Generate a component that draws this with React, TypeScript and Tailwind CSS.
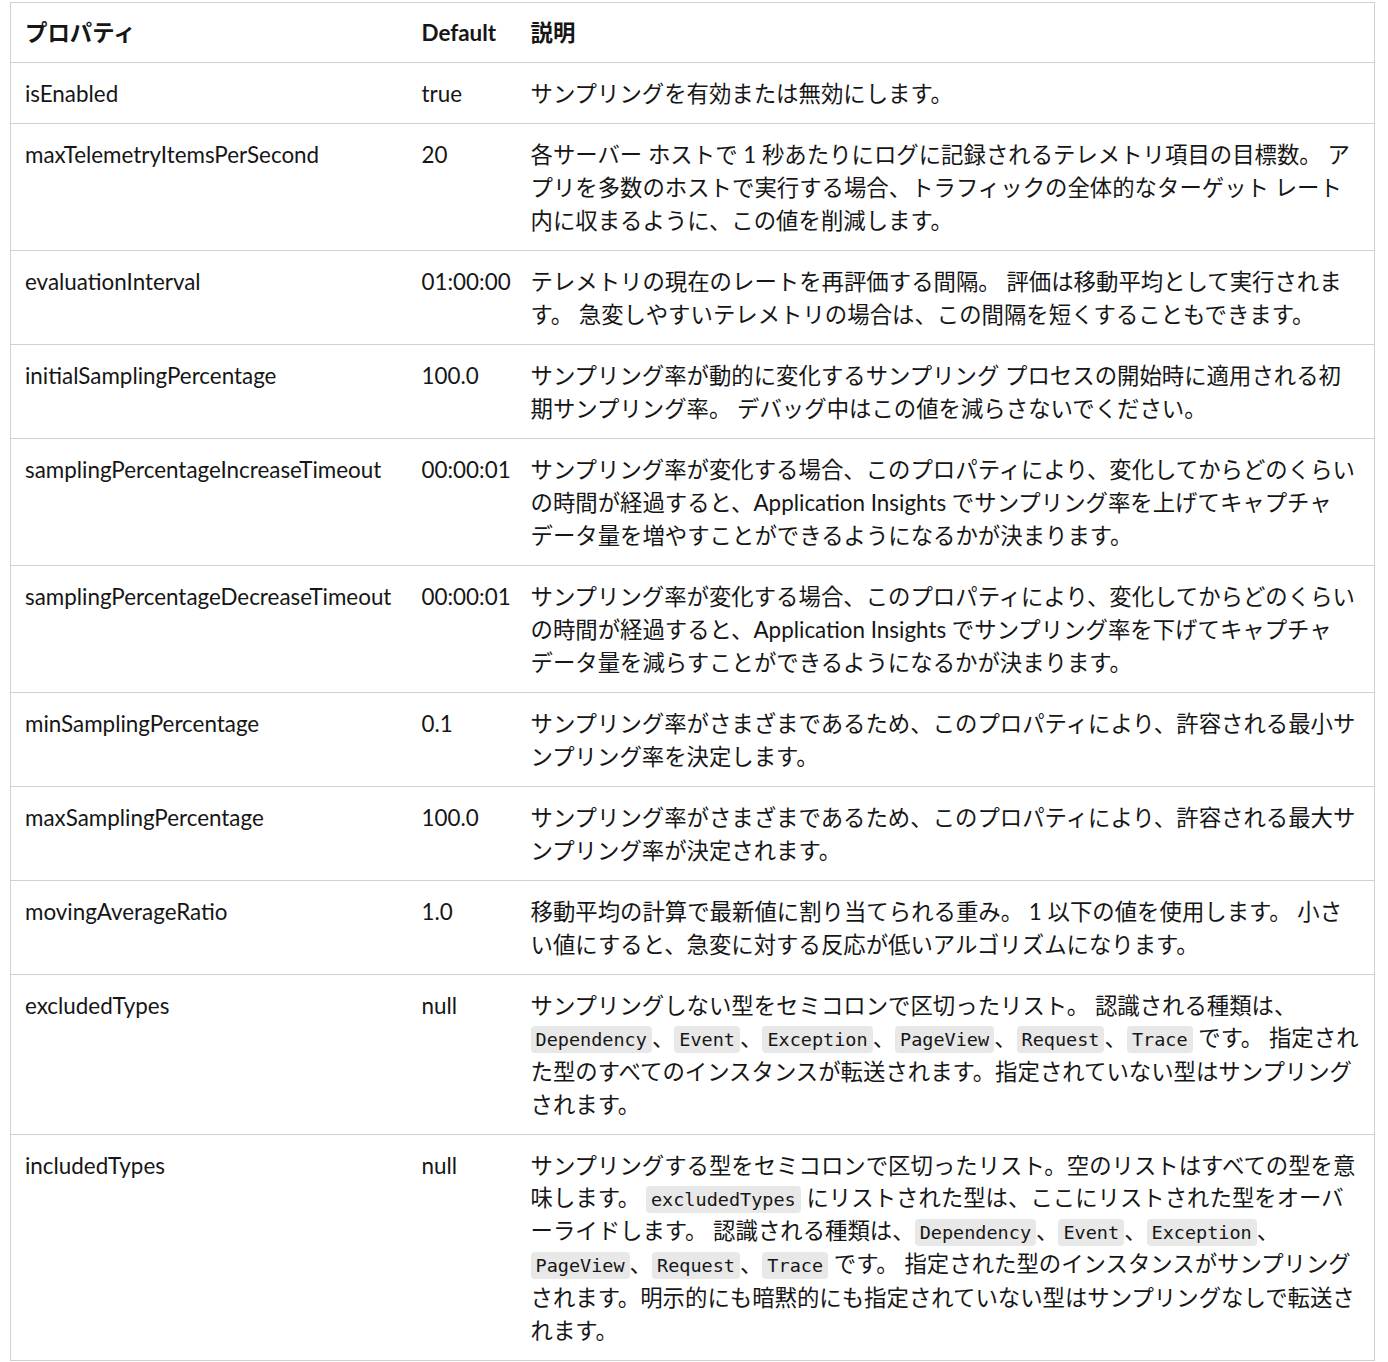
import React from "react";

type Seg = string | { c: string };
type Row = { name: string; def: string; lines: Seg[][] };

const C = ({ children }: { children: React.ReactNode }) => (
  <code className="rounded-[4px] bg-[#e8e8e8] px-[5px] py-[3px] text-[18.5px] text-[#161616] [font-family:'DejaVu_Sans_Mono','Liberation_Mono',monospace]">
    {children}
  </code>
);

const rows: Row[] = [
  { name: "isEnabled", def: "true", lines: [["サンプリングを有効または無効にします。"]] },
  {
    name: "maxTelemetryItemsPerSecond",
    def: "20",
    lines: [
      ["各サーバー ホストで 1 秒あたりにログに記録されるテレメトリ項目の目標数。 ア"],
      ["プリを多数のホストで実行する場合、トラフィックの全体的なターゲット レート"],
      ["内に収まるように、この値を削減します。"],
    ],
  },
  {
    name: "evaluationInterval",
    def: "01:00:00",
    lines: [
      ["テレメトリの現在のレートを再評価する間隔。 評価は移動平均として実行されま"],
      ["す。 急変しやすいテレメトリの場合は、この間隔を短くすることもできます。"],
    ],
  },
  {
    name: "initialSamplingPercentage",
    def: "100.0",
    lines: [
      ["サンプリング率が動的に変化するサンプリング プロセスの開始時に適用される初"],
      ["期サンプリング率。 デバッグ中はこの値を減らさないでください。"],
    ],
  },
  {
    name: "samplingPercentageIncreaseTimeout",
    def: "00:00:01",
    lines: [
      ["サンプリング率が変化する場合、このプロパティにより、変化してからどのくらい"],
      ["の時間が経過すると、Application Insights でサンプリング率を上げてキャプチャ"],
      ["データ量を増やすことができるようになるかが決まります。"],
    ],
  },
  {
    name: "samplingPercentageDecreaseTimeout",
    def: "00:00:01",
    lines: [
      ["サンプリング率が変化する場合、このプロパティにより、変化してからどのくらい"],
      ["の時間が経過すると、Application Insights でサンプリング率を下げてキャプチャ"],
      ["データ量を減らすことができるようになるかが決まります。"],
    ],
  },
  {
    name: "minSamplingPercentage",
    def: "0.1",
    lines: [
      ["サンプリング率がさまざまであるため、このプロパティにより、許容される最小サ"],
      ["ンプリング率を決定します。"],
    ],
  },
  {
    name: "maxSamplingPercentage",
    def: "100.0",
    lines: [
      ["サンプリング率がさまざまであるため、このプロパティにより、許容される最大サ"],
      ["ンプリング率が決定されます。"],
    ],
  },
  {
    name: "movingAverageRatio",
    def: "1.0",
    lines: [
      ["移動平均の計算で最新値に割り当てられる重み。 1 以下の値を使用します。 小さ"],
      ["い値にすると、急変に対する反応が低いアルゴリズムになります。"],
    ],
  },
  {
    name: "excludedTypes",
    def: "null",
    lines: [
      ["サンプリングしない型をセミコロンで区切ったリスト。 認識される種類は、"],
      [
        { c: "Dependency" },
        "、",
        { c: "Event" },
        "、",
        { c: "Exception" },
        "、",
        { c: "PageView" },
        "、",
        { c: "Request" },
        "、",
        { c: "Trace" },
        " です。 指定され",
      ],
      ["た型のすべてのインスタンスが転送されます。指定されていない型はサンプリング"],
      ["されます。"],
    ],
  },
  {
    name: "includedTypes",
    def: "null",
    lines: [
      ["サンプリングする型をセミコロンで区切ったリスト。空のリストはすべての型を意"],
      ["味します。 ", { c: "excludedTypes" }, " にリストされた型は、ここにリストされた型をオーバ"],
      [
        "ーライドします。 認識される種類は、",
        { c: "Dependency" },
        "、",
        { c: "Event" },
        "、",
        { c: "Exception" },
        "、",
      ],
      [{ c: "PageView" }, "、", { c: "Request" }, "、", { c: "Trace" }, " です。 指定された型のインスタンスがサンプリング"],
      ["されます。明示的にも暗黙的にも指定されていない型はサンプリングなしで転送さ"],
      ["れます。"],
    ],
  },
];

const Line = ({ children }: { children: React.ReactNode }) => (
  <div className="flex h-[33px] items-center whitespace-nowrap">
    <span>{children}</span>
  </div>
);

export default function App() {
  return (
    <div className="min-h-[1362px] bg-white pl-[10px] pr-[14px] pt-[2px] text-[#161616] [font-family:Lato,'Noto_Sans_CJK_JP',sans-serif]">
      <table className="w-[1364px] table-fixed border-collapse border border-[#d1d1d1] text-[22.4px] leading-[33px]">
        <colgroup>
          <col className="w-[397px]" />
          <col className="w-[109px]" />
          <col className="w-[858px]" />
        </colgroup>
        <thead>
          <tr className="border-b border-[#d1d1d1]">
            <th className="px-[14px] py-[13px] text-left align-top font-bold">
              <Line>プロパティ</Line>
            </th>
            <th className="px-[14px] py-[13px] text-left align-top font-bold">
              <Line>Default</Line>
            </th>
            <th className="px-[14px] py-[13px] text-left align-top font-bold">
              <Line>説明</Line>
            </th>
          </tr>
        </thead>
        <tbody>
          {rows.map((r) => (
            <tr key={r.name} className="border-b border-[#d1d1d1]">
              <td className="px-[14px] py-[13.5px] align-top">
                <Line>{r.name}</Line>
              </td>
              <td className="px-[14px] py-[13.5px] align-top">
                <Line>{r.def}</Line>
              </td>
              <td className="px-[14px] py-[13.5px] align-top">
                {r.lines.map((ln, i) => (
                  <Line key={i}>
                    {ln.map((s, j) =>
                      typeof s === "string" ? <span key={j}>{s}</span> : <C key={j}>{s.c}</C>
                    )}
                  </Line>
                ))}
              </td>
            </tr>
          ))}
        </tbody>
      </table>
    </div>
  );
}
